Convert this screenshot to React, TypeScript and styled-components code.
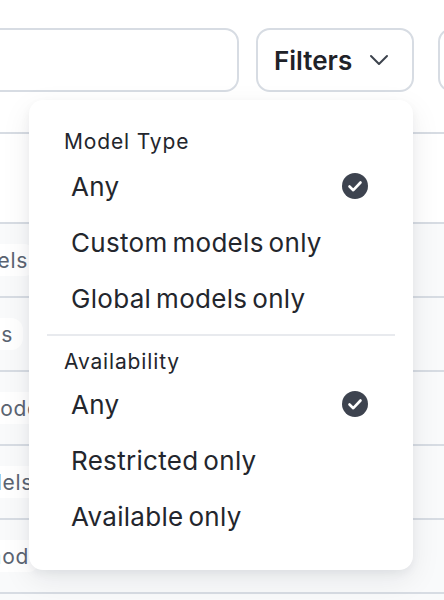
import styled, { createGlobalStyle } from 'styled-components'

const GlobalStyle = createGlobalStyle`
  html, body {
    margin: 0;
    height: 100%;
    overflow: hidden;
    background: #fff;
    font-family: Inter, "Liberation Sans", sans-serif;
  }
`

const Page = styled.div`
  position: relative;
  width: 444px;
  height: 600px;
  overflow: hidden;
  background: #fff;
`

const Toolbar = styled.div`
  display: flex;
  gap: 17px;
  height: 64px;
  padding-top: 28px;
  margin-left: -20px;
`

const SearchBox = styled.div`
  box-sizing: border-box;
  flex: none;
  width: 259px;
  height: 64px;
  border: 2px solid #d7dce3;
  border-radius: 14px;
  background: #fff;
`

const ToolButton = styled.button`
  box-sizing: border-box;
  flex: none;
  display: flex;
  align-items: center;
  gap: 15px;
  width: 158px;
  height: 64px;
  padding: 0 16px;
  border: 2px solid #d7dce3;
  border-radius: 14px;
  background: #fff;
  color: #1f2228;
  font-family: inherit;
  font-size: 26px;
  font-weight: 600;
`

const NextButton = styled(ToolButton)`
  width: 80px;
  margin-left: 7px;
`

const TableHead = styled.div`
  box-sizing: border-box;
  height: 90px;
  margin-top: 40px;
  border-top: 2px solid #d7dce3;
`

const Row = styled.div`
  box-sizing: border-box;
  display: flex;
  align-items: center;
  height: 74px;
  border-top: 2px solid #d7dce3;
  background: #f9fafb;
`

const Pill = styled.span<{ $right: number; $shift: number }>`
  display: flex;
  align-items: center;
  justify-content: flex-end;
  box-sizing: border-box;
  height: 32px;
  width: ${p => p.$right}px;
  padding-right: ${p => p.$shift}px;
  overflow: hidden;
  background: #fff;
  border-radius: 0 12px 12px 0;
  color: #5b6472;
  font-size: 21px;
  letter-spacing: 0.7px;
  white-space: nowrap;
`

const Menu = styled.div`
  position: absolute;
  left: 29px;
  top: 100px;
  box-sizing: border-box;
  width: 384px;
  height: 470px;
  padding: 28px 18px 0;
  background: #fff;
  border-radius: 14px;
  box-shadow: 0 10px 30px rgba(17, 24, 39, 0.08), 0 4px 10px rgba(17, 24, 39, 0.05);
`

const GroupLabel = styled.div<{ $after: number }>`
  height: 28px;
  margin-bottom: ${p => p.$after}px;
  line-height: 28px;
  padding-left: 17px;
  color: #23262d;
  font-size: 21px;
  font-weight: 400;
  letter-spacing: 0.85px;
`

const Item = styled.div`
  display: flex;
  align-items: center;
  justify-content: space-between;
  height: 56px;
  padding: 0 27px 0 24px;
  color: #23262d;
  font-size: 26px;
  letter-spacing: 0.3px;
  word-spacing: -2.7px;
`

const Divider = styled.div`
  height: 2px;
  margin: 8px 0 12px;
  background: #e8eaee;
`

const Chevron = () => (
  <svg width="24" height="24" viewBox="0 0 24 24" fill="none" stroke="#3d434d" strokeWidth="2" strokeLinecap="round" strokeLinejoin="round">
    <path d="M4 8l8 8 8-8" />
  </svg>
)

const CheckBadge = () => (
  <svg width="26" height="26" viewBox="0 0 26 26">
    <circle cx="13" cy="13" r="13" fill="#3d434f" />
    <path d="M7.5 13.5l3.8 3.7 7.2-7.7" fill="none" stroke="#fff" strokeWidth="2.6" strokeLinecap="round" strokeLinejoin="round" />
  </svg>
)

const rows = [
  { text: 'All models', right: 36, shift: 8 },
  { text: 'Models', right: 23, shift: 10 },
  { text: 'All mode', right: 40, shift: 0 },
  { text: 'All models', right: 40, shift: 7 },
  { text: 'All mod', right: 40, shift: 11 },
]

export default function App() {
  return (
    <Page>
      <GlobalStyle />
      <Toolbar>
        <SearchBox />
        <ToolButton>
          Filters
          <Chevron />
        </ToolButton>
        <NextButton />
      </Toolbar>
      <TableHead />
      {rows.map(r => (
        <Row key={r.text + r.right}>
          <Pill $right={r.right} $shift={r.shift}>{r.text}</Pill>
        </Row>
      ))}
      <Row />
      <Menu>
        <GroupLabel $after={2}>Model Type</GroupLabel>
        <Item>Any<CheckBadge /></Item>
        <Item>Custom models only</Item>
        <Item>Global models only</Item>
        <Divider />
        <GroupLabel $after={0}>Availability</GroupLabel>
        <Item>Any<CheckBadge /></Item>
        <Item>Restricted only</Item>
        <Item>Available only</Item>
      </Menu>
    </Page>
  )
}
